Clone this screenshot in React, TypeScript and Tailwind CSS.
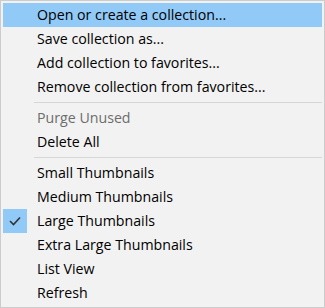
import { Fragment } from 'react';

type Item =
  | { kind: 'item'; label: string; active?: boolean; disabled?: boolean; checked?: boolean }
  | { kind: 'sep' };

const items: Item[] = [
  { kind: 'item', label: 'Open or create a collection...', active: true },
  { kind: 'item', label: 'Save collection as...' },
  { kind: 'item', label: 'Add collection to favorites...' },
  { kind: 'item', label: 'Remove collection from favorites...' },
  { kind: 'sep' },
  { kind: 'item', label: 'Purge Unused', disabled: true },
  { kind: 'item', label: 'Delete All' },
  { kind: 'sep' },
  { kind: 'item', label: 'Small Thumbnails' },
  { kind: 'item', label: 'Medium Thumbnails' },
  { kind: 'item', label: 'Large Thumbnails', checked: true },
  { kind: 'item', label: 'Extra Large Thumbnails' },
  { kind: 'item', label: 'List View' },
  { kind: 'item', label: 'Refresh' },
];

function CheckMark() {
  return (
    <svg width="12" height="10" viewBox="0 0 12 10" fill="none">
      <path d="M1 5 L4.5 8.5 L11 1.5" stroke="#333" strokeWidth="1.6" />
    </svg>
  );
}

export default function App() {
  return (
    <div
      className="w-[325px] h-[308px] bg-[#f2f2f2] border border-[#cccccc] p-[2px] text-[14.2px] text-black"
      style={{ fontFamily: '"Segoe UI", "Open Sans", "Noto Sans", sans-serif' }}
    >
      {items.map((it, i) => (
        <Fragment key={i}>
          {it.kind === 'sep' ? (
            <div className="h-[7px] flex items-center pl-[31px]">
              <div className="h-px w-full bg-[#d7d7d7]" />
            </div>
          ) : (
            <div
              className={`h-6 flex items-center ${it.active ? 'bg-[#91c9f7]' : ''} ${
                it.disabled ? 'text-[#6d6d6d]' : ''
              }`}
            >
              <div
                className={`w-6 h-6 flex items-center justify-center ${
                  it.checked ? 'bg-[#91c9f7]' : ''
                }`}
              >
                {it.checked && <CheckMark />}
              </div>
              <span className="pl-[10px] leading-none whitespace-nowrap">{it.label}</span>
            </div>
          )}
        </Fragment>
      ))}
    </div>
  );
}
